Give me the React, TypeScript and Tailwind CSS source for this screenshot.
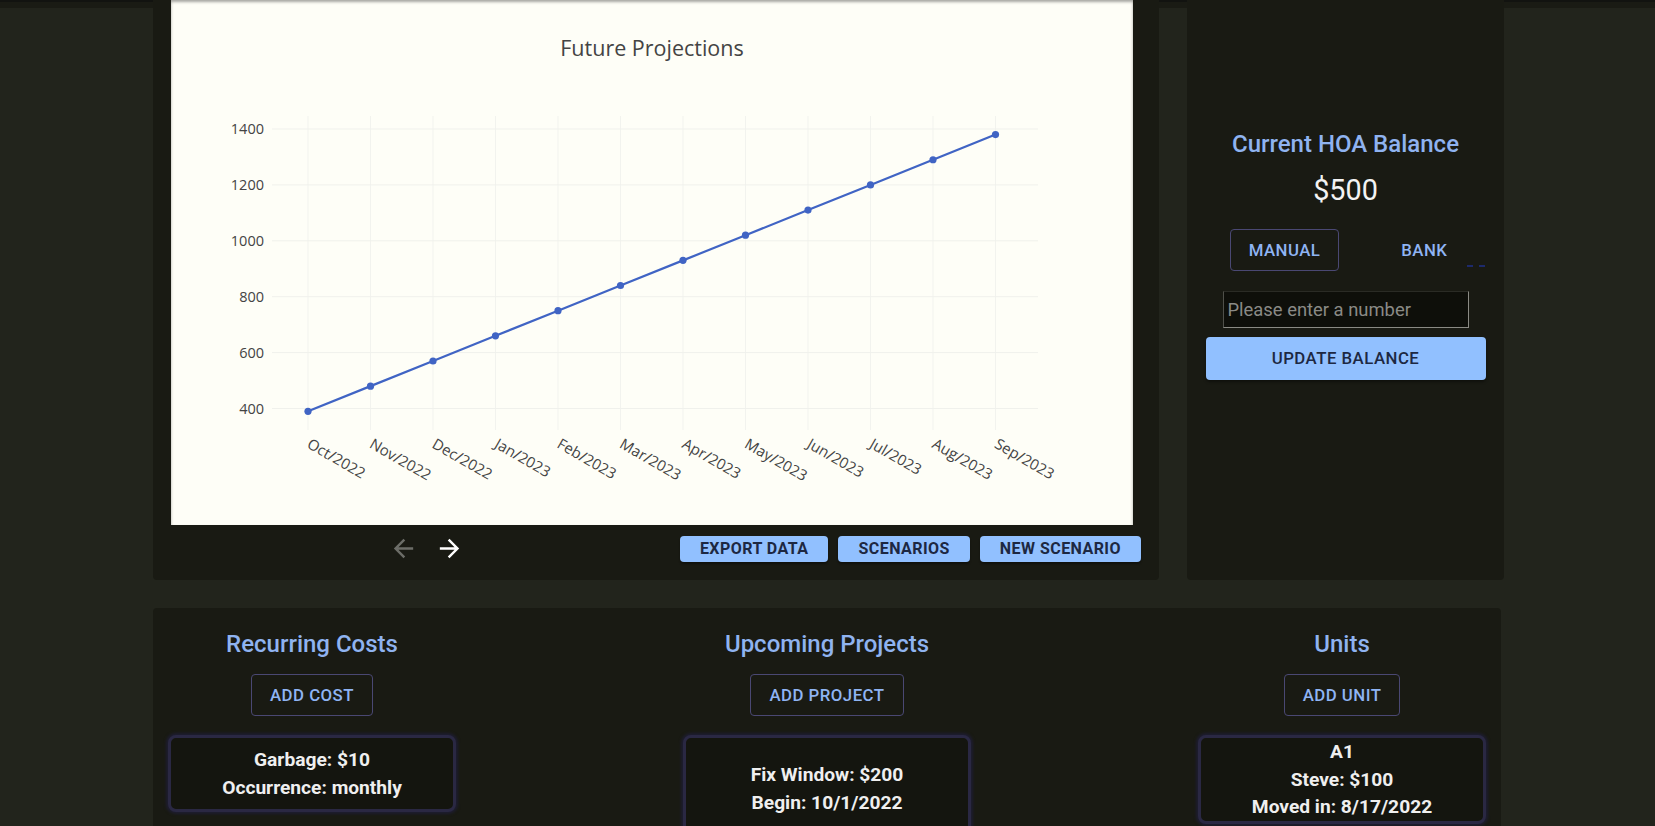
import React from "react";

const months = [
  "Oct/2022",
  "Nov/2022",
  "Dec/2022",
  "Jan/2023",
  "Feb/2023",
  "Mar/2023",
  "Apr/2023",
  "May/2023",
  "Jun/2023",
  "Jul/2023",
  "Aug/2023",
  "Sep/2023",
];
const values = [390, 480, 570, 660, 750, 840, 930, 1020, 1110, 1200, 1290, 1380];
const yTicks = [400, 600, 800, 1000, 1200, 1400];

const xOf = (i: number) => 137 + 62.5 * i;
const yOf = (v: number) => 408.5 - (v - 400) * 0.2795;

function ProjectionChart() {
  const points = values.map((v, i) => `${xOf(i)},${yOf(v)}`).join(" ");
  return (
    <svg width="962" height="525" viewBox="0 0 962 525" className="block">
      <text
        x="481"
        y="56"
        textAnchor="middle"
        fontSize="21.5"
        fill="#444"
        style={{ fontFamily: '"Open Sans", sans-serif' }}
      >
        Future Projections
      </text>
      {months.map((_, i) => (
        <line key={`v${i}`} x1={xOf(i)} x2={xOf(i)} y1="116" y2="430" stroke="#f2f3ee" strokeWidth="1" />
      ))}
      {yTicks.map((t) => (
        <line key={`h${t}`} x1="101" x2="867" y1={yOf(t)} y2={yOf(t)} stroke="#f0f1ec" strokeWidth="1" />
      ))}
      {yTicks.map((t) => (
        <text
          key={`yl${t}`}
          x="93"
          y={yOf(t) + 5}
          textAnchor="end"
          fontSize="14.5"
          fill="#444"
          style={{ fontFamily: '"Open Sans", sans-serif' }}
        >
          {t}
        </text>
      ))}
      {months.map((m, i) => (
        <text
          key={m}
          x={xOf(i) - 2}
          y="447"
          fontSize="15"
          fill="#444"
          transform={`rotate(30 ${xOf(i) - 2} 447)`}
          style={{ fontFamily: '"Open Sans", sans-serif' }}
        >
          {m}
        </text>
      ))}
      <polyline points={points} fill="none" stroke="#4064c4" strokeWidth="2.2" />
      {values.map((v, i) => (
        <circle key={`p${i}`} cx={xOf(i)} cy={yOf(v)} r="3.6" fill="#4064c4" />
      ))}
    </svg>
  );
}

function ArrowBack({ className }: { className?: string }) {
  return (
    <svg viewBox="0 0 24 24" className={className} fill="currentColor">
      <path d="M20 11H7.83l5.59-5.59L12 4l-8 8 8 8 1.41-1.41L7.83 13H20v-2z" />
    </svg>
  );
}

function ArrowForward({ className }: { className?: string }) {
  return (
    <svg viewBox="0 0 24 24" className={className} fill="currentColor">
      <path d="M12 4l-1.41 1.41L16.17 11H4v2h12.17l-5.58 5.59L12 20l8-8z" />
    </svg>
  );
}

function SmallButton({ label }: { label: string }) {
  return (
    <button className="h-[26px] px-[20px] rounded-[4px] bg-[#91c0ff] text-[#1d2842] text-[16px] font-bold tracking-[0.45px] uppercase leading-none shadow-[0_2px_2px_rgba(0,0,0,0.35)]">
      {label}
    </button>
  );
}

function OutlinedButton({ label }: { label: string }) {
  return (
    <button className="h-[42px] px-[18px] rounded-[4px] border border-[#4a4873] text-[#8fb4f3] text-[16.8px] font-medium tracking-[0.48px] uppercase leading-none">
      {label}
    </button>
  );
}

function Card({ lines, className }: { lines: string[]; className: string }) {
  return (
    <div
      className={`w-[288px] rounded-[8px] border-[3px] border-[#2a2843] bg-[#14150f] shadow-[0_0_3px_2px_#1e1d31] text-center text-[19.2px] font-bold leading-[27.5px] text-[#efefef] ${className}`}
    >
      {lines.map((l, i) => (
        <div key={i}>{l}</div>
      ))}
    </div>
  );
}

function Column({
  title,
  button,
  children,
}: {
  title: string;
  button: string;
  children: React.ReactNode;
}) {
  return (
    <div className="w-[292px] flex flex-col items-center">
      <div className="text-[24px] font-medium leading-[32px] text-[#8fb3f0]">{title}</div>
      <div className="mt-[14px]">
        <OutlinedButton label={button} />
      </div>
      <div className="mt-[19px]">{children}</div>
    </div>
  );
}

export default function App() {
  return (
    <div
      className="min-h-screen w-full bg-[linear-gradient(to_bottom,#121310_0px,#121310_2px,#1a1b14_2px,#1a1b14_8px,#22241c_8px)] overflow-hidden"
      style={{ fontFamily: 'Roboto, "Liberation Sans", sans-serif' }}
    >
      <div className="w-[1351px] ml-[153px]">
        <div className="flex gap-[28px]">
          <div className="w-[1006px] h-[580px] rounded-b-[4px] bg-[#191a13] pl-[18px] pr-[18px]">
            <div className="w-[962px] h-[525px] bg-[#fefef7] shadow-[inset_0_2px_3px_rgba(0,0,0,0.35)]">
              <ProjectionChart />
            </div>
            <div className="mt-[9px] flex items-center">
              <div className="ml-[218px] flex items-center gap-[17px]">
                <ArrowBack className="w-[29px] h-[29px] text-[#6c6d68]" />
                <ArrowForward className="w-[29px] h-[29px] text-white" />
              </div>
              <div className="ml-auto flex gap-[10px]">
                <SmallButton label="Export Data" />
                <SmallButton label="Scenarios" />
                <SmallButton label="New Scenario" />
              </div>
            </div>
          </div>

          <div className="w-[317px] h-[580px] rounded-b-[4px] bg-[#191a13] flex flex-col items-center pt-[128px]">
            <div className="text-[24px] font-medium leading-[32px] text-[#8fb3f0]">
              Current HOA Balance
            </div>
            <div className="mt-[12px] text-[28.8px] leading-[36px] text-[#f3f3f3]">$500</div>
            <div className="mt-[21px] flex items-center gap-[48px]">
              <OutlinedButton label="Manual" />
              <button className="relative h-[42px] w-[74px] text-[#8fb4f3] text-[16.8px] font-medium tracking-[0.48px] uppercase leading-none">
                Bank
                <span className="absolute left-[80px] top-[36px] flex gap-[6px]">
                  <span className="block w-[6px] h-[2px] bg-[#1d2a6b]" />
                  <span className="block w-[6px] h-[2px] bg-[#1d2a6b]" />
                </span>
              </button>
            </div>
            <input
              type="text"
              placeholder="Please enter a number"
              className="mt-[20px] w-[246px] h-[37px] pl-[4px] bg-[#0e0f0a] text-[18.4px] text-[#ddd] placeholder:text-[#8a8a86] border border-t-[#2a2b25] border-l-[#4f504a] border-r-[#8a8a84] border-b-[#8a8a84] outline-none"
            />
            <button className="mt-[9px] w-[280px] h-[43px] rounded-[4px] bg-[#91c0ff] text-[#1d2842] text-[16.8px] font-medium tracking-[0.48px] uppercase shadow-[0_2px_3px_rgba(0,0,0,0.4)]">
              Update Balance
            </button>
          </div>
        </div>

        <div className="mt-[28px] w-[1348px] h-[260px] rounded-[4px] bg-[#191a13] px-[13px] pt-[20px] flex justify-between">
          <Column title="Recurring Costs" button="Add Cost">
            <Card className="py-[8px]" lines={["Garbage: $10", "Occurrence: monthly"]} />
          </Column>
          <Column title="Upcoming Projects" button="Add Project">
            <Card className="pt-[23px] pb-[40px]" lines={["Fix Window: $200", "Begin: 10/1/2022"]} />
          </Column>
          <Column title="Units" button="Add Unit">
            <Card className="py-0" lines={["A1", "Steve: $100", "Moved in: 8/17/2022"]} />
          </Column>
        </div>
      </div>
    </div>
  );
}
